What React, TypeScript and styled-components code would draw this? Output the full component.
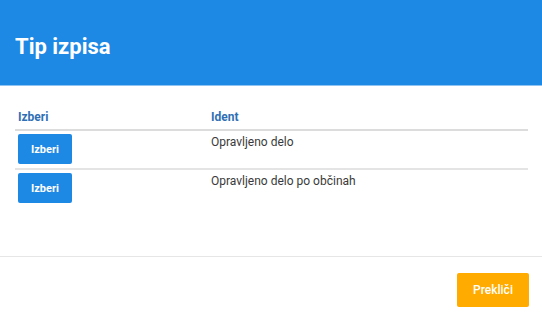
import React from "react";
import styled, { createGlobalStyle } from "styled-components";

const Global = createGlobalStyle`
  html, body { margin: 0; padding: 0; background: #fff; }
  body { font-family: Roboto, "Liberation Sans", sans-serif; }
  * { box-sizing: border-box; }
`;

const Dialog = styled.div`
  width: 542px;
  height: 322px;
  display: flex;
  flex-direction: column;
  background: #fff;
  overflow: hidden;
`;

const Header = styled.header`
  height: 86px;
  background: #1e88e5;
  display: flex;
  align-items: center;
  padding: 0 15px;
  border-bottom: 1px solid #8ec3f2;
`;

const Title = styled.h1`
  margin: 7px 0 0;
  font-size: 22px;
  font-weight: 700;
  color: #fff;
`;

const Body = styled.div`
  flex: 1;
  padding: 20px 14px 0 15px;
`;

const Table = styled.table`
  width: 100%;
  border-collapse: collapse;
  font-size: 12px;
`;

const Th = styled.th<{ $w?: string }>`
  text-align: left;
  color: #2f6fb5;
  font-weight: 700;
  font-size: 12px;
  padding: 4px 3px 5px;
  border-bottom: 2px solid #dcdcdc;
  width: ${(p) => p.$w || "auto"};
`;

const Tr = styled.tr`
  & + & td { border-top: 2px solid #e4e4e4; }
`;

const Td = styled.td`
  padding: 3px 3px 4px;
  vertical-align: top;
  color: #3a3a3a;
  font-size: 12px;
  line-height: 16px;
  height: 37px;
`;

const SelectButton = styled.button`
  width: 54px;
  height: 30px;
  border: none;
  border-radius: 2px;
  background: #1e88e5;
  color: #fff;
  font-family: Roboto, "Liberation Sans", sans-serif;
  font-size: 11px;
  font-weight: 700;
  padding: 0;
  display: block;
`;

const Footer = styled.footer`
  height: 66px;
  border-top: 1px solid #e6e6e6;
  display: flex;
  justify-content: flex-end;
  align-items: flex-start;
  padding: 16px 13px 0 0;
`;

const CancelButton = styled.button`
  width: 72px;
  height: 34px;
  border: none;
  border-radius: 2px;
  background: #ffab00;
  color: #fff;
  font-family: Roboto, "Liberation Sans", sans-serif;
  font-size: 12px;
  font-weight: 500;
`;

const rows = ["Opravljeno delo", "Opravljeno delo po občinah"];

export default function App() {
  return (
    <>
      <Global />
      <Dialog>
        <Header>
          <Title>Tip izpisa</Title>
        </Header>
        <Body>
          <Table>
            <thead>
              <tr>
                <Th $w="193px">Izberi</Th>
                <Th>Ident</Th>
              </tr>
            </thead>
            <tbody>
              {rows.map((r) => (
                <Tr key={r}>
                  <Td>
                    <SelectButton>Izberi</SelectButton>
                  </Td>
                  <Td>{r}</Td>
                </Tr>
              ))}
            </tbody>
          </Table>
        </Body>
        <Footer>
          <CancelButton>Prekliči</CancelButton>
        </Footer>
      </Dialog>
    </>
  );
}
